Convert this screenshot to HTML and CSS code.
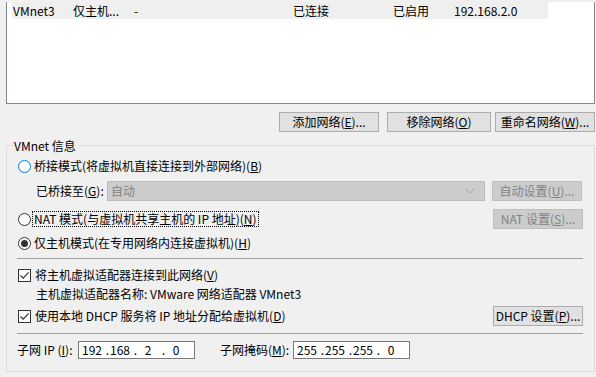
FILE: index.html
```html
<!DOCTYPE html>
<html lang="zh-CN">
<head>
<meta charset="utf-8">
<title>虚拟网络编辑器</title>
<link rel="stylesheet" href="styles.css">
</head>
<body>
<div class="list">
  <div class="row">
    <span>VMnet3</span>
    <span>仅主机...</span>
    <span>-</span>
    <span>已连接</span>
    <span>已启用</span>
    <span>192.168.2.0</span>
  </div>
</div>

<div class="actions">
  <button class="btn w100">添加网络(<u>E</u>)...</button>
  <button class="btn w104">移除网络(<u>O</u>)</button>
  <button class="btn w100 last">重命名网络(<u>W</u>)...</button>
</div>

<div class="group">
  <div class="legend">VMnet 信息</div>

  <div class="line r1">
    <span class="radio focus"></span>
    <span class="label">桥接模式(将虚拟机直接连接到外部网络)(<u>B</u>)</span>
  </div>

  <div class="line r2">
    <span class="sublabel">已桥接至(<u>G</u>):</span>
    <div class="combo">
      <span>自动</span>
      <svg class="chev" width="10" height="6" viewBox="0 0 10 6"><path d="M0.5 0.5 L5 5 L9.5 0.5" fill="none" stroke="#a6a6a6" stroke-width="1"/></svg>
    </div>
    <button class="btn side disabled">自动设置(<u>U</u>)...</button>
  </div>

  <div class="line r3">
    <span class="radio"></span>
    <span class="label focusrect">NAT 模式(与虚拟机共享主机的 IP 地址)(<u>N</u>)</span>
    <button class="btn side disabled push">NAT 设置(<u>S</u>)...</button>
  </div>

  <div class="line r4">
    <span class="radio checked"></span>
    <span class="label">仅主机模式(在专用网络内连接虚拟机)(<u>H</u>)</span>
  </div>

  <div class="sep s1"></div>

  <div class="line c1">
    <span class="check"><svg width="11" height="11" viewBox="0 0 11 11"><path d="M1.5 5.5 L4.2 8.2 L9.6 2.4" fill="none" stroke="#333" stroke-width="1.2"/></svg></span>
    <span class="label">将主机虚拟适配器连接到此网络(<u>V</u>)</span>
  </div>

  <div class="line adapter">
    <span>主机虚拟适配器名称: VMware 网络适配器 VMnet3</span>
  </div>

  <div class="line c2">
    <span class="check"><svg width="11" height="11" viewBox="0 0 11 11"><path d="M1.5 5.5 L4.2 8.2 L9.6 2.4" fill="none" stroke="#333" stroke-width="1.2"/></svg></span>
    <span class="label">使用本地 DHCP 服务将 IP 地址分配给虚拟机(<u>D</u>)</span>
    <button class="btn side push">DHCP 设置(<u>P</u>)...</button>
  </div>

  <div class="sep s2"></div>

  <div class="line subnet">
    <span class="flabel">子网 IP (<u>I</u>):</span>
    <div class="ip">
      <span class="oct">192</span><span class="dot">.</span><span class="oct">168</span><span class="dot">.</span><span class="oct">2</span><span class="dot">.</span><span class="oct">0</span>
    </div>
    <span class="flabel mask">子网掩码(<u>M</u>):</span>
    <div class="ip">
      <span class="oct">255</span><span class="dot">.</span><span class="oct">255</span><span class="dot">.</span><span class="oct">255</span><span class="dot">.</span><span class="oct">0</span>
    </div>
  </div>
</div>
</body>
</html>
```

FILE: styles.css
```css
html, body {
  margin: 0;
  padding: 0;
  background: #f0f0f0;
}
body {
  width: 596px;
  height: 377px;
  overflow: hidden;
  font-family: "Noto Sans CJK SC", "Noto Sans", sans-serif;
  font-size: 12px;
  line-height: 16px;
  color: #000;
}
u { text-decoration: underline; text-underline-offset: 1px; }

/* list view */
.list {
  margin: 0 1px 0 6px;
  height: 101px;
  background: #fff;
  border: 1px solid #828790;
  border-top: none;
  padding: 0 5px;
}
.row {
  margin-top: 2px;
  width: 535px;
  height: 17px;
  background: #efefef;
  display: grid;
  grid-template-columns: 60px 61px 159px 100px 61px auto;
  align-items: center;
  padding-left: 1px;
  white-space: nowrap;
}

/* buttons */
.actions {
  display: flex;
  justify-content: flex-end;
  margin: 8px 1px 0 0;
}
.btn {
  font: inherit;
  font-size: 12px;
  line-height: 16px;
  height: 20px;
  padding: 0;
  margin: 0;
  background: #e1e1e1;
  border: 1px solid #adadad;
  color: #000;
  white-space: nowrap;
  display: flex;
  align-items: center;
  justify-content: center;
}
.w100 { width: 100px; }
.w104 { width: 104px; margin-left: 8px; }
.last { margin-left: 4px; }
.btn.side { width: 90px; margin-left: auto; }
.btn.disabled {
  background: #cccccc;
  border-color: #bfbfbf;
  color: #838383;
}

/* group box */
.group {
  margin: 13px 1px 0 6px;
  border: 1px solid #dcdcdc;
  padding: 0 11px 12px 10px;
}
.legend {
  width: max-content;
  margin: -8px 0 0 -4px;
  padding: 0 2px 0 1px;
  height: 16px;
  background: #f0f0f0;
}
.line {
  display: flex;
  align-items: center;
  height: 20px;
  white-space: nowrap;
}
.r1 { margin-top: 2px; }
.r2 { margin-top: 5px; }
.r3 { margin-top: 8px; }
.r4 { margin-top: 4px; }
.c1 { margin-top: 6px; }
.adapter { height: 18px; padding-left: 19px; }
.c2 { margin-top: 3px; }
.subnet { margin-top: 7px; height: 18px; }

.sep { height: 1px; background: #a0a0a0; }
.s1 { margin-top: 5px; }
.s2 { margin-top: 7px; }

.radio {
  box-sizing: border-box;
  width: 13px;
  height: 13px;
  margin: 0 3px 0 1px;
  border: 1px solid #333;
  border-radius: 50%;
  background: #fff;
  flex: none;
  display: flex;
  align-items: center;
  justify-content: center;
}
.radio.focus { border-color: #0078d7; }
.radio.checked::after {
  content: "";
  width: 7px;
  height: 7px;
  border-radius: 50%;
  background: #333;
}
.check {
  box-sizing: border-box;
  width: 13px;
  height: 13px;
  margin: 0 4px 0 1px;
  border: 1px solid #333;
  background: #fff;
  flex: none;
  display: flex;
  align-items: center;
  justify-content: center;
}
.check svg { display: block; }

.focusrect {
  margin-left: -1px;
  padding: 0 1px;
  line-height: 14px;
  outline: 1px dotted #000;
}

.sublabel { width: 71px; padding-left: 19px; flex: none; }
.combo {
  box-sizing: border-box;
  width: 378px;
  height: 20px;
  background: #cccccc;
  border: 1px solid #bfbfbf;
  color: #838383;
  display: flex;
  align-items: center;
  padding: 0 9px 0 3px;
  justify-content: space-between;
  flex: none;
}
.chev { display: block; }
.r2 .btn.side { margin-left: 7px; }

.flabel { width: 61px; flex: none; }
.flabel.mask { width: 73px; margin-left: 25px; }
.ip {
  box-sizing: border-box;
  width: 117px;
  height: 18px;
  border: 1px solid #7a7a7a;
  background: #fff;
  display: flex;
  align-items: center;
  padding-left: 2px;
  flex: none;
}
.oct { width: 22px; text-align: center; flex: none; }
.dot { width: 6px; text-align: right; flex: none; }
```
